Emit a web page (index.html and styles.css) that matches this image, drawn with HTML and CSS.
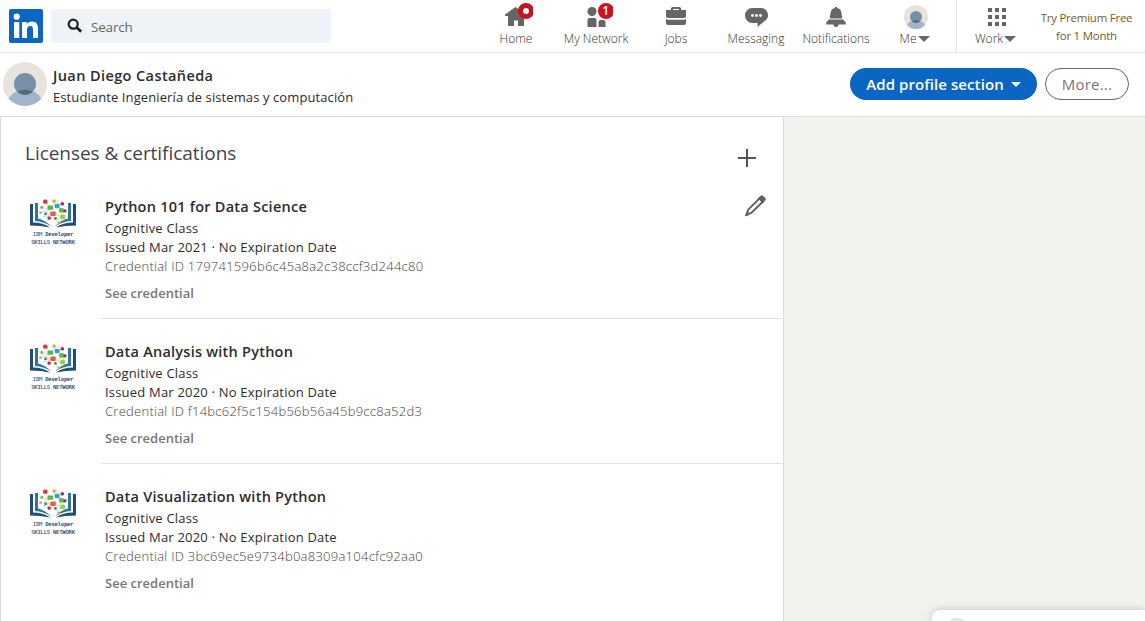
FILE: index.html
```
<!DOCTYPE html>
<html lang="en">
<head>
<meta charset="utf-8">
<title>Licenses &amp; certifications | LinkedIn</title>
<link rel="stylesheet" href="styles.css">
</head>
<body>
<svg class="defs" width="0" height="0" aria-hidden="true">
  <symbol id="avatar" viewBox="0 0 44 44">
    <clipPath id="round"><circle cx="22" cy="22" r="22"/></clipPath>
    <g clip-path="url(#round)">
      <rect width="44" height="44" fill="#e8e3dc"/>
      <circle cx="22" cy="47" r="19.5" fill="#a0b4cb"/>
      <circle cx="22" cy="22" r="11" fill="#788fa9"/>
      <path d="M14.300 29.500a19.500 19.500 0 0 1 15.400 0a11 11 0 0 1-15.400 0z" fill="#56687a"/>
    </g>
  </symbol>
  <symbol id="book" viewBox="0 0 48 30">
    <path d="M1 5h3v18.500q10 0 17 5Q12 26.500 1 26.500z" fill="#1f4e79"/>
    <path d="M6 4h3v15.500q7 1.500 13 8Q15 22.500 6 22z" fill="#2878a3"/>
    <path d="M47 5h-3v18.500q-10 0-17 5Q36 26.500 47 26.500z" fill="#1f4e79"/>
    <path d="M42 4h-3v15.500q-7 1.500-13 8Q33 22.500 42 22z" fill="#2878a3"/>
    <g transform="translate(-2.400 -.7) scale(1.100)">
      <path d="M17 3l5 6 5-7 5 3-4 3 7 4-7 4-5-1-8-3 7-3 6 6 4 4 2-6-6-6M12 9l10 0-7 8 9-2 4 7" fill="none" stroke="#c0bdaa" stroke-width=".5"/>
      <rect x="15" y="1" width="4" height="4" rx="1.500" fill="#e03540"/>
      <rect x="23.500" y="1" width="3" height="3" rx="1" fill="#e5a14b"/>
      <rect x="19" y="6.500" width="5" height="4" rx="1" fill="#54b64b"/>
      <rect x="25.500" y="5" width="4.500" height="4" rx="1" fill="#27a8d1"/>
      <rect x="31" y="3.500" width="3" height="3" rx="1" fill="#b01b5c"/>
      <rect x="12.500" y="7" width="2.500" height="2.500" rx="1" fill="#73b850"/>
      <rect x="11.500" y="12" width="2.500" height="2" fill="#d8a33d"/>
      <rect x="16" y="13" width="2.500" height="2.500" rx="1" fill="#24958e"/>
      <rect x="21.500" y="12" width="5" height="4" rx="1" fill="#f05b3c"/>
      <rect x="29.500" y="9" width="4.500" height="4" rx="1" fill="#58b848"/>
      <rect x="33.500" y="10" width="2.800" height="2.800" rx="1" fill="#8c397f"/>
      <rect x="19" y="16.500" width="3" height="3" rx="1" fill="#c7235c"/>
      <rect x="25" y="17" width="2.500" height="2.500" rx="1" fill="#428c52"/>
      <rect x="30.500" y="15" width="4.500" height="4" rx="1" fill="#a5c946"/>
      <rect x="28" y="21" width="2.500" height="2.500" rx="1" fill="#d9a43d"/>
    </g>
  </symbol>
</svg>

<header class="topbar">
  <svg class="brand" width="34" height="34" viewBox="0 0 34 34" aria-label="LinkedIn">
    <rect width="34" height="34" rx="2" fill="#0a66c2"/>
    <g fill="#fff"><circle cx="7.700" cy="7.700" r="3.100"/><rect x="5" y="13" width="5.300" height="16"/>
    <path d="M13 13h4.800v2.300c1-1.700 2.700-2.700 5-2.700 4.900 0 6.200 3 6.200 7.500V29h-5v-7.900c0-2.300-.3-4.200-2.800-4.200-2.500 0-3.200 1.700-3.200 4.100v8h-5z"/></g>
  </svg>
  <div class="search">
    <svg width="16" height="16" viewBox="0 0 16 16" fill="none" stroke="#1d2226"><circle cx="6.200" cy="6.200" r="4.500" stroke-width="2.200"/><path d="M9.600 9.500l4.600 4.100" stroke-width="2.800"/></svg>
    <span>Search</span>
  </div>
  <nav class="nav">
    <a class="tab"><svg width="34" height="32" viewBox="0 0 34 32"><path d="M16.500 7l10.500 7.500V16h-2v9.300q0 .7-.7.700H19v-5.500h-4V26H9.700q-.7 0-.7-.7V16H6v-1.500z" fill="#666"/><circle cx="27" cy="11" r="8" fill="#cb1119"/><circle cx="27" cy="11" r="3" fill="#fff"/></svg><span>Home</span></a>
    <a class="tab"><svg width="34" height="32" viewBox="0 0 34 32"><g fill="#666"><circle cx="13" cy="11.500" r="4.500"/><path d="M8.500 27v-7q0-2 2-2h5q2 0 2 2v7zM19.500 27v-5q0-2 2-2h3q2 0 2 2v5z"/></g><circle cx="27" cy="11" r="8" fill="#cb1119"/><text x="26.600" y="15" class="count">1</text></svg><span>My Network</span></a>
    <a class="tab"><svg width="34" height="32" viewBox="0 0 34 32"><path d="M12 10V8.500q0-1.500 1.500-1.500h7q1.500 0 1.500 1.500V10h5v6q0 2-2 2H9q-2 0-2-2v-6zM14 10h6V9h-6zM7 19q1 .7 2 .7h16q1 0 2-.7v4q0 2-2 2H9q-2 0-2-2z" fill="#666" fill-rule="evenodd"/></svg><span>Jobs</span></a>
    <a class="tab"><svg width="34" height="32" viewBox="0 0 34 32"><path d="M13 8h9.500a6.500 7.500 0 0 1 6.500 7.500q0 3.500-4 6L18.500 27v-4H13a7 7.500 0 0 1 0-15z" fill="#666"/><g fill="#fff"><circle cx="13.500" cy="15.500" r="1.400"/><circle cx="17.500" cy="15.500" r="1.400"/><circle cx="21.500" cy="15.500" r="1.400"/></g></svg><span>Messaging</span></a>
    <a class="tab"><svg width="34" height="32" viewBox="0 0 34 32"><path d="M16 7h2v1q4 .5 4.500 5l.8 5.500H10.700l.8-5.500Q12 8.500 16 8zM10 19.500h14q3 2 3 5h-7.500a2.500 2.500 0 0 1-5 0H7q0-3 3-5z" fill="#666"/></svg><span>Notifications</span></a>
    <a class="tab"><svg width="34" height="32" viewBox="0 0 34 32"><use href="#avatar" x="5" y="5" width="24" height="24"/></svg><span class="menu">Me<svg width="12" height="6" viewBox="0 0 12 6"><path d="M0 0h12L6 6z" fill="#666"/></svg></span></a>
  </nav>
  <a class="tab work"><svg width="34" height="32" viewBox="0 0 34 32"><path d="M8 8h4v4H8zM15 8h4v4h-4zM22 8h4v4h-4zM8 15h4v4H8zM15 15h4v4h-4zM22 15h4v4h-4zM8 22h4v4H8zM15 22h4v4h-4zM22 22h4v4h-4z" fill="#666"/></svg><span class="menu">Work<svg width="12" height="6" viewBox="0 0 12 6"><path d="M0 0h12L6 6z" fill="#666"/></svg></span></a>
  <a class="premium"><span>Try Premium Free</span><span>for 1 Month</span></a>
</header>

<section class="profile">
  <svg width="44" height="44"><use href="#avatar" width="44" height="44"/></svg>
  <div class="who"><h1>Juan Diego Castañeda</h1><p>Estudiante Ingeniería de sistemas y computación</p></div>
  <button class="add"><span>Add profile section</span><svg width="10" height="5" viewBox="0 0 10 5"><path d="M0 0h10L5 5z" fill="#fff"/></svg></button>
  <button class="more">More...</button>
</section>

<main class="content">
  <section class="card">
    <div class="heading">
      <h2>Licenses &amp; certifications</h2>
      <svg width="20" height="20" viewBox="0 0 20 20"><path d="M10 1v18M1 10h18" stroke="#555" stroke-width="2"/></svg>
    </div>
    <article class="item">
      <div class="logo"><svg width="48" height="30"><use href="#book" width="48" height="30"/></svg><span>IBM <b>Developer</b></span><span>SKILLS NETWORK</span></div>
      <div class="details">
        <h3>Python 101 for Data Science</h3><p>Cognitive Class</p><p>Issued Mar 2021 · No Expiration Date</p><p class="cred">Credential ID 179741596b6c45a8a2c38ccf3d244c80</p><a>See credential</a>
        <svg class="edit" width="24" height="24" viewBox="0 0 24 24"><path d="M3.500 20.500l1.700-4.800L16.300 4.700l3.200 3.200L8.300 19z" fill="none" stroke="#5e5e5e" stroke-width="1.900"/><path d="M15 4l2.800-2.300q1.200-1 2.400.2l2 2q1.200 1.200.2 2.400L20 9z" fill="#5e5e5e"/><path d="M2 22.500l1.600-4.500 2.900 2.900z" fill="#5e5e5e"/></svg>
      </div>
    </article>
    <article class="item">
      <div class="logo"><svg width="48" height="30"><use href="#book" width="48" height="30"/></svg><span>IBM <b>Developer</b></span><span>SKILLS NETWORK</span></div>
      <div class="details">
        <h3>Data Analysis with Python</h3><p>Cognitive Class</p><p>Issued Mar 2020 · No Expiration Date</p><p class="cred">Credential ID f14bc62f5c154b56b56a45b9cc8a52d3</p><a>See credential</a>
      </div>
    </article>
    <article class="item">
      <div class="logo"><svg width="48" height="30"><use href="#book" width="48" height="30"/></svg><span>IBM <b>Developer</b></span><span>SKILLS NETWORK</span></div>
      <div class="details">
        <h3>Data Visualization with Python</h3><p>Cognitive Class</p><p>Issued Mar 2020 · No Expiration Date</p><p class="cred">Credential ID 3bc69ec5e9734b0a8309a104cfc92aa0</p><a>See credential</a>
      </div>
    </article>
  </section>
</main>
<aside class="chat"><svg width="22" height="22"><circle cx="11" cy="11" r="11" fill="#e3e1dc"/></svg></aside>
</body>
</html>
```
FILE: styles.css
```
* { box-sizing: border-box; }
body {
  margin: 0;
  width: 1145px;
  height: 621px;
  overflow: hidden;
  background: #f3f2ef;
  font-family: "Open Sans", "Noto Sans", sans-serif;
  font-size: 13.5px;
  color: #2c2c2c;
  white-space: nowrap;
}
h1, h2, h3, p { margin: 0; font-weight: 400; }
svg { display: block; flex: none; }
.defs { position: absolute; }

.topbar {
  display: flex;
  height: 53px;
  background: #fff;
  border-bottom: 1px solid #e4e4e4;
}
.brand { margin: 9px 8px 0 9px; }
.search {
  display: flex;
  align-items: center;
  gap: 8px;
  width: 280px;
  height: 34px;
  margin-top: 9px;
  padding: 0 16px;
  border-radius: 4px;
  background: #eef3f8;
  color: #666;
}
.search span { padding-top: 1px; letter-spacing: -.2px; }
.nav { display: flex; margin-left: 145px; }
.tab {
  display: flex;
  flex-direction: column;
  align-items: center;
  width: 80px;
  height: 52px;
  font-size: 12px;
}
.tab span { line-height: 16px; margin-top: -1px; font-weight: 300; color: #333; }
.count { fill: #fff; font-size: 12px; font-weight: 600; text-anchor: middle; }
.menu { display: flex; align-items: center; gap: 2px; padding-right: 2px; }
.work { border-left: 1px solid #e8e8e8; }
.work .menu { gap: 1px; }
.premium {
  display: flex;
  flex-direction: column;
  align-items: center;
  width: 101px;
  padding-top: 9px;
  font-size: 11.5px;
  letter-spacing: -.25px;
  line-height: 18px;
  color: #7a5a1c;
}

.profile {
  display: flex;
  align-items: center;
  height: 64px;
  padding: 0 16px 1px 3px;
  background: #fff;
  border-bottom: 1px solid #dcdcdc;
}
.who { flex: 1; padding: 5px 0 0 6px; }
.who h1 { font-size: 14.5px; line-height: 21px; font-weight: 600; letter-spacing: .4px; }
.who p { font-size: 13px; line-height: 22px; letter-spacing: .1px; }
button {
  height: 32px;
  padding: 0;
  border: 0;
  border-radius: 16px;
  font: 600 15px "Open Sans", sans-serif;
}
.add {
  display: flex;
  align-items: center;
  justify-content: center;
  gap: 7px;
  width: 187px;
  margin-right: 8px;
  background: #0a66c2;
  color: #fff;
  letter-spacing: .08px;
}
.more { width: 84px; background: #fff; border: 1px solid #666; color: #777; font-weight: 400; letter-spacing: .2px; }

.card {
  width: 784px;
  height: 504px;
  padding-top: 14px;
  background: #fff;
  border: solid #dcdcdc;
  border-width: 0 1px;
}
.heading { display: flex; justify-content: space-between; align-items: center; height: 46px; padding: 0 26px 0 24px; }
.heading h2 { font-size: 19px; line-height: 26px; margin-top: -3px; letter-spacing: -.04px; color: #444; }
.heading svg { margin-top: 8px; }
.item { display: flex; height: 145px; padding-left: 28px; }
.logo { display: flex; flex-direction: column; align-items: center; width: 48px; margin-right: 24px; padding-top: 22px; color: #1f4e79; font-family: "DejaVu Sans Mono", monospace; font-size: 5.500px; line-height: 8px; letter-spacing: -.2px; }
.logo span { margin-top: 1px; }
.logo span + span { margin-top: 0; -webkit-text-stroke: .15px #1f4e79; }
.details { position: relative; flex: 1; height: 142px; padding: 19px 0 0 4px; border-bottom: 1px solid #e4e4e4; }
.item:last-child .details { border: 0; }
.details h3 { font-size: 14.5px; line-height: 22px; font-weight: 600; letter-spacing: .24px; margin-bottom: 1px; }
.details p { font-size: 13px; line-height: 19px; letter-spacing: .2px; }
.details .cred { color: #444; font-weight: 300; letter-spacing: .26px; }
.details a { display: block; margin-top: 8px; line-height: 19px; font-size: 13px; font-weight: 600; color: #777; }
.edit { position: absolute; top: 17px; right: 16px; }

.chat {
  position: absolute;
  left: 932px;
  top: 610px;
  width: 213px;
  height: 11px;
  padding: 8px 0 0 14px;
  overflow: visible;
  background: #fff;
  border-radius: 8px 0 0 0;
  box-shadow: 0 0 9px rgba(0, 0, 0, .22);
}
```
